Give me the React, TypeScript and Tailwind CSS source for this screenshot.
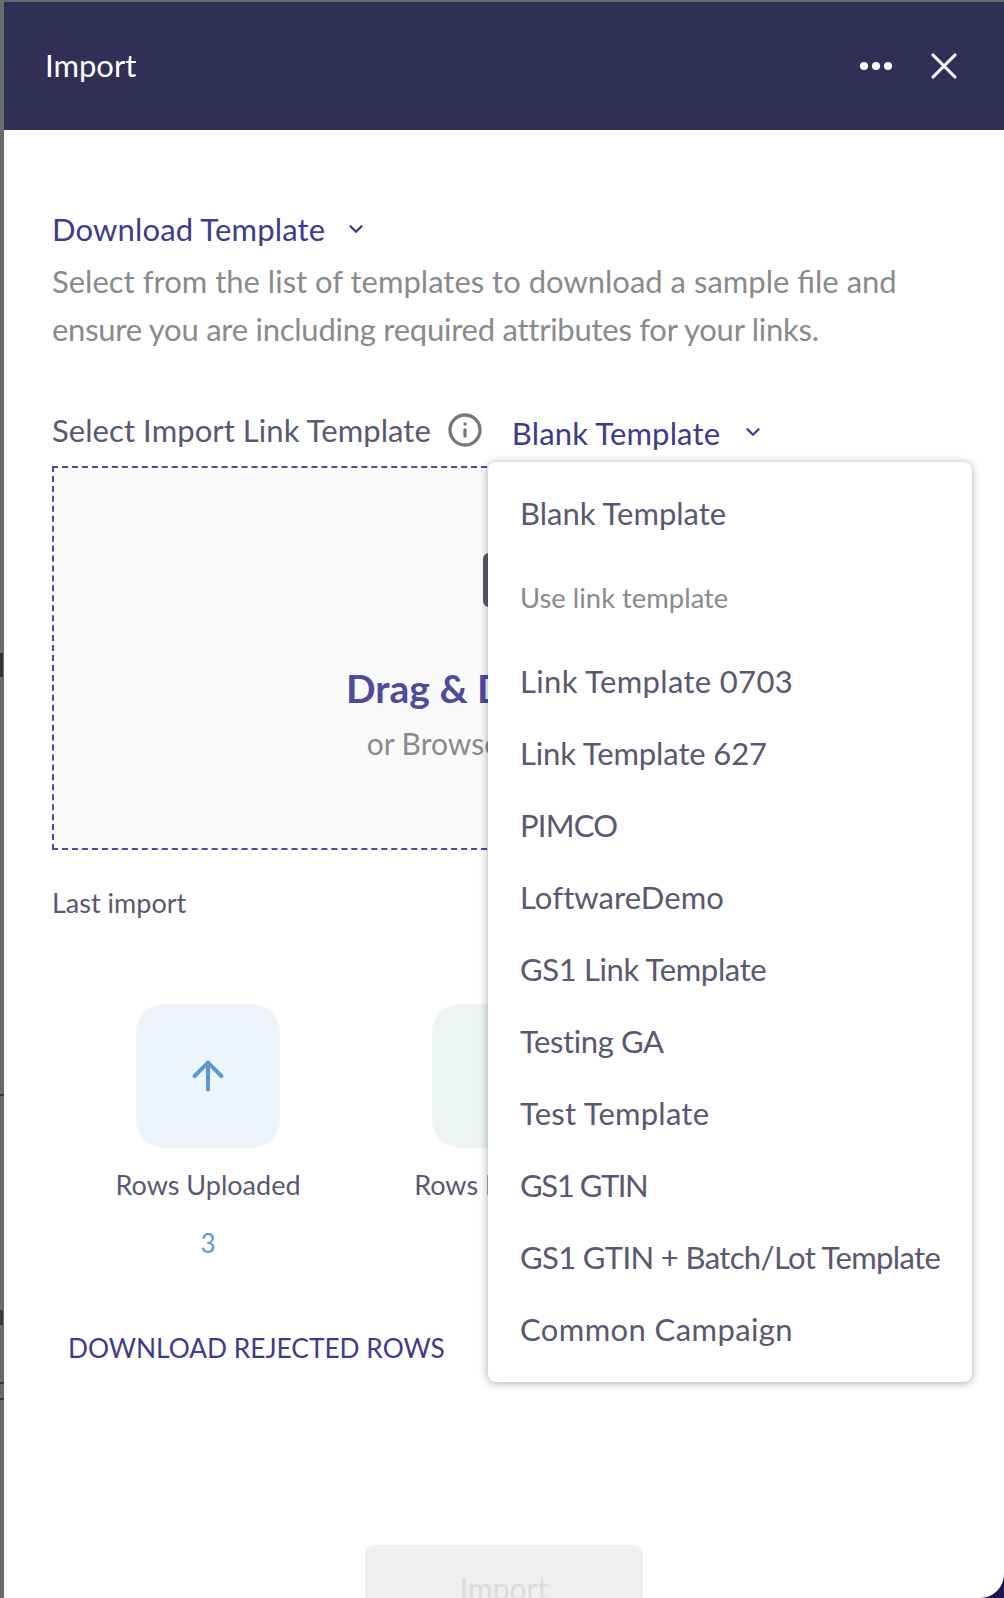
import { ArrowUp, ChevronDown, Info, X } from "lucide-react";

const items = [
  { t: "Link Template 0703", c: "tracking-[0.34px]" },
  { t: "Link Template 627", c: "tracking-[-0.12px]" },
  { t: "PIMCO", c: "tracking-[-0.8px]" },
  { t: "LoftwareDemo", c: "tracking-[0.08px]" },
  { t: "GS1 Link Template", c: "tracking-[-0.36px]" },
  { t: "Testing GA", c: "tracking-[-0.4px]" },
  { t: "Test Template", c: "tracking-[0.24px]" },
  { t: "GS1 GTIN", c: "tracking-[-1.4px]" },
  { t: "GS1 GTIN + Batch/Lot Template", c: "tracking-[-0.63px]" },
  { t: "Common Campaign", c: "tracking-[0.4px]" },
];

function Stat({ label, value, tile, color }: { label: string; value: string; tile: string; color: string }) {
  return (
    <div className="flex flex-col items-center">
      <div className={`flex h-[144px] w-[144px] items-center justify-center rounded-[28px] ${tile}`}>
        <ArrowUp size={46} strokeWidth={2.1} className={color} />
      </div>
      <div className="mt-[19px] text-[27px] leading-[36px] text-[#5a5870]">{label}</div>
      <div className={`mt-[23px] text-[26px] leading-[34px] ${color}`}>{value}</div>
    </div>
  );
}

export default function App() {
  return (
    <div className="relative flex h-[1598px] w-[1004px] overflow-hidden bg-[#6b6b6b] pt-[2px] pl-[4px] font-['Lato','Noto_Sans',sans-serif]">
      <div className="absolute right-0 bottom-0 h-[30px] w-[30px] bg-[#1c1454]" />
      <div className="absolute top-[653px] left-0 h-[24px] w-[3px] bg-[#33323c]" />
      <div className="absolute top-[1094px] left-0 h-[2px] w-[4px] bg-[#3a3a3a]" />
      <div className="absolute top-[1310px] left-0 h-[15px] w-[3px] bg-[#3a3a3a]" />
      <div className="absolute top-[1382px] left-0 h-[2px] w-[4px] bg-[#3a3a3a]" />
      <div className="absolute top-[1398px] left-0 h-[2px] w-[4px] bg-[#3a3a3a]" />

      <div className="relative flex min-w-0 flex-1 flex-col overflow-hidden rounded-br-[24px] bg-white">
        <header className="flex h-[128px] shrink-0 items-center justify-between bg-[#312f55] pr-[38px] pl-[41px] text-white">
          <span className="-mt-[2px] text-[31px] leading-[40px]">Import</span>
          <div className="flex items-center gap-[30px]">
            <div className="flex items-center gap-[4px]">
              <span className="h-[8px] w-[8px] rounded-full bg-white" />
              <span className="h-[8px] w-[8px] rounded-full bg-white" />
              <span className="h-[8px] w-[8px] rounded-full bg-white" />
            </div>
            <X size={44} strokeWidth={1.7} />
          </div>
        </header>

        <main className="flex flex-1 flex-col px-[48px] pt-[79px]">
          <div className="flex items-center gap-[20px] text-[#3f3a8c]">
            <span className="text-[31px] leading-[40px] tracking-[0.15px]">Download Template</span>
            <ChevronDown size={22} strokeWidth={2.5} />
          </div>
          <p className="mt-[8px] text-[31px] leading-[48px] text-[#8a8a8a]">
            <span className="block">Select from the list of templates to download a sample file and</span>
            <span className="block tracking-[-0.25px]">ensure you are including required attributes for your links.</span>
          </p>

          <div className="mt-[54px] flex items-center">
            <span className="text-[31px] leading-[40px] tracking-[0.07px] text-[#5a5870]">Select Import Link Template</span>
            <Info size={36} strokeWidth={2.2} className="ml-[16px] text-[#777777]" />
            <span className="mt-[6px] ml-[29px] text-[31px] leading-[40px] tracking-[0.15px] text-[#3f3a8c]">Blank Template</span>
            <ChevronDown size={22} strokeWidth={2.5} className="mt-[4px] ml-[22px] text-[#3f3a8c]" />
          </div>

          <div className="mt-[13px] flex h-[384px] flex-col items-center border-2 border-dashed border-[#4f4a9e] bg-[#fafafa] pt-[85px]">
            <div className="h-[54px] w-[42px] rounded-[6px] bg-[#5a5870]" />
            <div className="mt-[56px] mr-[8px] text-[39px] leading-[50px] font-bold text-[#4f4a9e]">Drag &amp; Drop Files</div>
            <div className="mt-[11px] mr-[4px] text-[30px] leading-[38px] text-[#8a8a8a]">or Browse to Upload</div>
          </div>

          <div className="mt-[35px] text-[27px] leading-[36px] text-[#5a5870]">Last import</div>

          <div className="mt-[83px] grid grid-cols-3 px-[8px]">
            <Stat label="Rows Uploaded" value="3" tile="bg-[#eef4fb]" color="text-[#5b9bd5]" />
            <Stat label="Rows Imported" value="3" tile="bg-[#edf6f3]" color="text-[#5fb89a]" />
            <Stat label="Rows Rejected" value="0" tile="bg-[#fbeeee]" color="text-[#d56b6b]" />
          </div>

          <div className="mt-[69px] pl-[16px] text-[26.3px] leading-[38px] text-[#3f3a8c]">DOWNLOAD REJECTED ROWS</div>

          <div className="mt-auto flex justify-center">
            <div className="-mb-[10px] flex h-[63px] w-[278px] items-end justify-center rounded-t-[8px] bg-[#efefef] text-[30px] leading-[40px] text-[#dcdcdc]">
              Import
            </div>
          </div>
        </main>

        <div className="absolute top-[460px] left-[484px] w-[484px] rounded-[8px] bg-white px-[32px] pt-[31px] pb-[33px] shadow-[0_1px_8px_rgba(0,0,0,0.35)]">
          <div className="text-[31px] leading-[40px] text-[#5a5870]">Blank Template</div>
          <div className="mt-[45px] mb-[43px] text-[27.4px] leading-[40px] text-[#8a8a8a]">Use link template</div>
          <div className="flex flex-col gap-[32px]">
            {items.map(({ t, c }) => (
              <div key={t} className={`text-[31px] leading-[40px] whitespace-nowrap text-[#5a5870] ${c}`}>{t}</div>
            ))}
          </div>
        </div>
      </div>
    </div>
  );
}
